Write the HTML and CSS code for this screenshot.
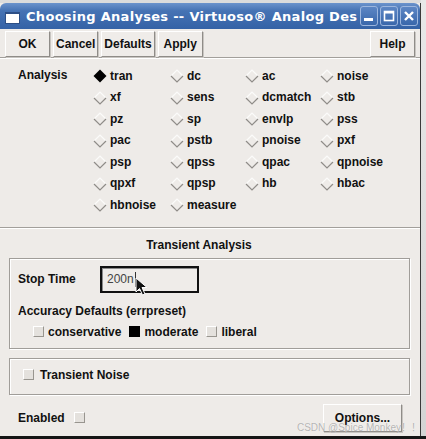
FILE: index.html
```html
<!DOCTYPE html>
<html>
<head>
<meta charset="utf-8">
<link rel="stylesheet" href="styles.css">
</head>
<body>
<div class="screen">
  <div class="top-row">
    <div class="window">
      <div class="titlebar">
        <span class="winicon"></span>
        <span class="title">Choosing Analyses -- Virtuoso® Analog Des</span>
        <div class="tbtns">
          <span class="tbtn"><svg width="18" height="20" viewBox="0 0 18 20"><rect x="4" y="12" width="9" height="3" fill="#fff"/></svg></span>
          <span class="tbtn"><svg width="18" height="20" viewBox="0 0 18 20"><rect x="4.5" y="5.5" width="9" height="9" fill="none" stroke="#fff" stroke-width="1.6"/><rect x="4.5" y="5.5" width="9" height="2" fill="#fff"/></svg></span>
          <span class="tbtn"><svg width="18" height="20" viewBox="0 0 18 20"><path d="M5 6 L13 14 M13 6 L5 14" stroke="#fff" stroke-width="2.4"/></svg></span>
        </div>
      </div>
      <div class="toolbar">
        <button class="btn">OK</button>
        <button class="btn">Cancel</button>
        <button class="btn">Defaults</button>
        <button class="btn">Apply</button>
        <span class="spacer"></span>
        <button class="btn">Help</button>
      </div>
      <div class="analysis">
        <div class="alabel">Analysis</div>
        <div class="agrid">
          <div class="radio"><svg class="dia" width="14" height="14" viewBox="0 0 14 14"><path d="M7 0.5 L13.5 7 L7 13.5 L0.5 7 Z" fill="#000"/></svg>tran</div>
          <div class="radio"><svg class="dia" width="14" height="14" viewBox="0 0 14 14"><path d="M1 7 L7 1 L13 7" stroke="#fbfbfa" stroke-width="1.2" fill="none"/><path d="M1 7 L7 13 L13 7" stroke="#8f8c88" stroke-width="1.2" fill="none"/></svg>dc</div>
          <div class="radio"><svg class="dia" width="14" height="14" viewBox="0 0 14 14"><path d="M1 7 L7 1 L13 7" stroke="#fbfbfa" stroke-width="1.2" fill="none"/><path d="M1 7 L7 13 L13 7" stroke="#8f8c88" stroke-width="1.2" fill="none"/></svg>ac</div>
          <div class="radio"><svg class="dia" width="14" height="14" viewBox="0 0 14 14"><path d="M1 7 L7 1 L13 7" stroke="#fbfbfa" stroke-width="1.2" fill="none"/><path d="M1 7 L7 13 L13 7" stroke="#8f8c88" stroke-width="1.2" fill="none"/></svg>noise</div>

          <div class="radio"><svg class="dia" width="14" height="14" viewBox="0 0 14 14"><path d="M1 7 L7 1 L13 7" stroke="#fbfbfa" stroke-width="1.2" fill="none"/><path d="M1 7 L7 13 L13 7" stroke="#8f8c88" stroke-width="1.2" fill="none"/></svg>xf</div>
          <div class="radio"><svg class="dia" width="14" height="14" viewBox="0 0 14 14"><path d="M1 7 L7 1 L13 7" stroke="#fbfbfa" stroke-width="1.2" fill="none"/><path d="M1 7 L7 13 L13 7" stroke="#8f8c88" stroke-width="1.2" fill="none"/></svg>sens</div>
          <div class="radio"><svg class="dia" width="14" height="14" viewBox="0 0 14 14"><path d="M1 7 L7 1 L13 7" stroke="#fbfbfa" stroke-width="1.2" fill="none"/><path d="M1 7 L7 13 L13 7" stroke="#8f8c88" stroke-width="1.2" fill="none"/></svg>dcmatch</div>
          <div class="radio"><svg class="dia" width="14" height="14" viewBox="0 0 14 14"><path d="M1 7 L7 1 L13 7" stroke="#fbfbfa" stroke-width="1.2" fill="none"/><path d="M1 7 L7 13 L13 7" stroke="#8f8c88" stroke-width="1.2" fill="none"/></svg>stb</div>

          <div class="radio"><svg class="dia" width="14" height="14" viewBox="0 0 14 14"><path d="M1 7 L7 1 L13 7" stroke="#fbfbfa" stroke-width="1.2" fill="none"/><path d="M1 7 L7 13 L13 7" stroke="#8f8c88" stroke-width="1.2" fill="none"/></svg>pz</div>
          <div class="radio"><svg class="dia" width="14" height="14" viewBox="0 0 14 14"><path d="M1 7 L7 1 L13 7" stroke="#fbfbfa" stroke-width="1.2" fill="none"/><path d="M1 7 L7 13 L13 7" stroke="#8f8c88" stroke-width="1.2" fill="none"/></svg>sp</div>
          <div class="radio"><svg class="dia" width="14" height="14" viewBox="0 0 14 14"><path d="M1 7 L7 1 L13 7" stroke="#fbfbfa" stroke-width="1.2" fill="none"/><path d="M1 7 L7 13 L13 7" stroke="#8f8c88" stroke-width="1.2" fill="none"/></svg>envlp</div>
          <div class="radio"><svg class="dia" width="14" height="14" viewBox="0 0 14 14"><path d="M1 7 L7 1 L13 7" stroke="#fbfbfa" stroke-width="1.2" fill="none"/><path d="M1 7 L7 13 L13 7" stroke="#8f8c88" stroke-width="1.2" fill="none"/></svg>pss</div>

          <div class="radio"><svg class="dia" width="14" height="14" viewBox="0 0 14 14"><path d="M1 7 L7 1 L13 7" stroke="#fbfbfa" stroke-width="1.2" fill="none"/><path d="M1 7 L7 13 L13 7" stroke="#8f8c88" stroke-width="1.2" fill="none"/></svg>pac</div>
          <div class="radio"><svg class="dia" width="14" height="14" viewBox="0 0 14 14"><path d="M1 7 L7 1 L13 7" stroke="#fbfbfa" stroke-width="1.2" fill="none"/><path d="M1 7 L7 13 L13 7" stroke="#8f8c88" stroke-width="1.2" fill="none"/></svg>pstb</div>
          <div class="radio"><svg class="dia" width="14" height="14" viewBox="0 0 14 14"><path d="M1 7 L7 1 L13 7" stroke="#fbfbfa" stroke-width="1.2" fill="none"/><path d="M1 7 L7 13 L13 7" stroke="#8f8c88" stroke-width="1.2" fill="none"/></svg>pnoise</div>
          <div class="radio"><svg class="dia" width="14" height="14" viewBox="0 0 14 14"><path d="M1 7 L7 1 L13 7" stroke="#fbfbfa" stroke-width="1.2" fill="none"/><path d="M1 7 L7 13 L13 7" stroke="#8f8c88" stroke-width="1.2" fill="none"/></svg>pxf</div>

          <div class="radio"><svg class="dia" width="14" height="14" viewBox="0 0 14 14"><path d="M1 7 L7 1 L13 7" stroke="#fbfbfa" stroke-width="1.2" fill="none"/><path d="M1 7 L7 13 L13 7" stroke="#8f8c88" stroke-width="1.2" fill="none"/></svg>psp</div>
          <div class="radio"><svg class="dia" width="14" height="14" viewBox="0 0 14 14"><path d="M1 7 L7 1 L13 7" stroke="#fbfbfa" stroke-width="1.2" fill="none"/><path d="M1 7 L7 13 L13 7" stroke="#8f8c88" stroke-width="1.2" fill="none"/></svg>qpss</div>
          <div class="radio"><svg class="dia" width="14" height="14" viewBox="0 0 14 14"><path d="M1 7 L7 1 L13 7" stroke="#fbfbfa" stroke-width="1.2" fill="none"/><path d="M1 7 L7 13 L13 7" stroke="#8f8c88" stroke-width="1.2" fill="none"/></svg>qpac</div>
          <div class="radio"><svg class="dia" width="14" height="14" viewBox="0 0 14 14"><path d="M1 7 L7 1 L13 7" stroke="#fbfbfa" stroke-width="1.2" fill="none"/><path d="M1 7 L7 13 L13 7" stroke="#8f8c88" stroke-width="1.2" fill="none"/></svg>qpnoise</div>

          <div class="radio"><svg class="dia" width="14" height="14" viewBox="0 0 14 14"><path d="M1 7 L7 1 L13 7" stroke="#fbfbfa" stroke-width="1.2" fill="none"/><path d="M1 7 L7 13 L13 7" stroke="#8f8c88" stroke-width="1.2" fill="none"/></svg>qpxf</div>
          <div class="radio"><svg class="dia" width="14" height="14" viewBox="0 0 14 14"><path d="M1 7 L7 1 L13 7" stroke="#fbfbfa" stroke-width="1.2" fill="none"/><path d="M1 7 L7 13 L13 7" stroke="#8f8c88" stroke-width="1.2" fill="none"/></svg>qpsp</div>
          <div class="radio"><svg class="dia" width="14" height="14" viewBox="0 0 14 14"><path d="M1 7 L7 1 L13 7" stroke="#fbfbfa" stroke-width="1.2" fill="none"/><path d="M1 7 L7 13 L13 7" stroke="#8f8c88" stroke-width="1.2" fill="none"/></svg>hb</div>
          <div class="radio"><svg class="dia" width="14" height="14" viewBox="0 0 14 14"><path d="M1 7 L7 1 L13 7" stroke="#fbfbfa" stroke-width="1.2" fill="none"/><path d="M1 7 L7 13 L13 7" stroke="#8f8c88" stroke-width="1.2" fill="none"/></svg>hbac</div>

          <div class="radio"><svg class="dia" width="14" height="14" viewBox="0 0 14 14"><path d="M1 7 L7 1 L13 7" stroke="#fbfbfa" stroke-width="1.2" fill="none"/><path d="M1 7 L7 13 L13 7" stroke="#8f8c88" stroke-width="1.2" fill="none"/></svg>hbnoise</div>
          <div class="radio"><svg class="dia" width="14" height="14" viewBox="0 0 14 14"><path d="M1 7 L7 1 L13 7" stroke="#fbfbfa" stroke-width="1.2" fill="none"/><path d="M1 7 L7 13 L13 7" stroke="#8f8c88" stroke-width="1.2" fill="none"/></svg>measure</div>
        </div>
      </div>
      <div class="sectitle">Transient Analysis</div>
      <div class="group g1">
        <div class="stoprow">
          <span class="stoplabel">Stop Time</span>
          <div class="field">200n<span class="caret"></span>
            <svg class="pointer" width="14" height="20" viewBox="0 0 14 20"><path d="M1 1 L1 15 L4.5 11.5 L7.5 18 L10 17 L7 10.5 L12 10.5 Z" fill="#111" stroke="#fff" stroke-width="1"/></svg>
          </div>
        </div>
        <div class="acclabel">Accuracy Defaults (errpreset)</div>
        <div class="opts">
          <span class="opt"><span class="chk"></span>conservative</span>
          <span class="opt"><span class="chk on"></span>moderate</span>
          <span class="opt"><span class="chk"></span>liberal</span>
        </div>
      </div>
      <div class="group g2">
        <span class="opt wide"><span class="chk"></span>Transient Noise</span>
      </div>
      <div class="footer">
        <span class="opt enabled">Enabled<span class="chk"></span></span>
        <button class="btn options">Options...</button>
      </div>
    </div>
    <div class="outside"></div>
  </div>
  <div class="bottom"></div>
  <div class="watermark">CSDN @Spice Monkey！！</div>
</div>
</body>
</html>
```
FILE: styles.css
```css
html, body {
  margin: 0;
  padding: 0;
}
body {
  font-family: "Liberation Sans", Arial, sans-serif;
  font-size: 12px;
  font-weight: bold;
  color: #111;
}
.screen {
  width: 426px;
  height: 439px;
  position: relative;
  overflow: hidden;
  background: #dcdcdc;
  display: flex;
  flex-direction: column;
}
.top-row {
  display: flex;
  height: 436px;
}
.window {
  width: 420px;
  margin-top: 3px;
  background: #eeebe8;
  border-right: 1px solid #3a3a3a;
  display: flex;
  flex-direction: column;
}
.outside {
  flex: 1;
  background: linear-gradient(#e8e8e8, #d4d4d4);
}
.bottom {
  height: 3px;
  background: #151515;
}

/* title bar */
.titlebar {
  height: 26px;
  flex: none;
  display: flex;
  align-items: center;
  padding-left: 5px;
  background: linear-gradient(#6b93cc 0%, #4673b4 30%, #3462a6 100%);
  border-radius: 6px 6px 0 0;
}
.winicon {
  width: 13px;
  height: 9px;
  flex: none;
  background: #fff;
  border: 1px solid #2d4f86;
  border-top: 2px solid #2d4f86;
  margin-top: 3px;
}
.title {
  flex: 1;
  min-width: 0;
  margin-left: 6px;
  white-space: nowrap;
  overflow: hidden;
  color: #fff;
  font-family: "DejaVu Sans", sans-serif;
  font-weight: bold;
  font-size: 13px;
  letter-spacing: 0.3px;
}
.tbtns {
  display: flex;
  gap: 2px;
  padding: 0 2px 0 2px;
}
.tbtn {
  width: 18px;
  height: 20px;
  box-sizing: border-box;
  border: 1px solid #9cb6de;
  border-radius: 3px;
  background: linear-gradient(#5c86c4, #3967ab);
  display: flex;
}
.tbtn svg {
  margin: -1px;
}

/* buttons */
.btn {
  font-family: "Liberation Sans", Arial, sans-serif;
  font-weight: bold;
  font-size: 12px;
  color: #111;
  height: 26px;
  min-width: 45px;
  padding: 0 2px;
  background: #efece9;
  border: 1px solid;
  border-color: #ffffff #8f8c88 #8f8c88 #ffffff;
  box-shadow: 1px 1px 0 #c8c5c1;
  margin: 0;
}
.toolbar {
  height: 29px;
  box-sizing: border-box;
  flex: none;
  display: flex;
  gap: 3px;
  padding: 2px 5px 1px 5px;
  border-bottom: 1px solid #a29f9b;
  box-shadow: 0 1px 0 #ffffff;
}
.spacer {
  flex: 1;
}

/* analysis */
.analysis {
  display: flex;
  padding: 6px 0 11px 18px;
  border-bottom: 1px solid #a29f9b;
  box-shadow: 0 1px 0 #ffffff;
  margin-top: 1px;
}
.alabel {
  width: 75px;
  line-height: 21.5px;
}
.agrid {
  display: grid;
  grid-template-columns: 77px 75px 75px auto;
  grid-auto-rows: 21.5px;
}
.radio {
  display: flex;
  align-items: center;
  gap: 3px;
}
.dia {
  flex: none;
  margin-top: 1px;
}

/* transient */
.sectitle {
  text-align: center;
  line-height: 16px;
  margin-top: 9px;
  padding-right: 22px;
}
.group {
  margin: 5px 10px 0 9px;
  border: 1px solid #a09d99;
  box-shadow: inset 1px 1px 0 #ffffff, 1px 1px 0 #ffffff;
}
.g1 {
  padding: 7px 8px 8px 8px;
}
.stoprow {
  display: flex;
  align-items: center;
}
.stoplabel {
  width: 82px;
}
.field {
  position: relative;
  width: 99px;
  height: 27px;
  box-sizing: border-box;
  border: 2px solid #111;
  box-shadow: inset 1px 1px 0 #8a8a8a;
  background: #efece9;
  padding-left: 5px;
  display: flex;
  align-items: center;
  font-weight: normal;
  color: #444;
  font-size: 12px;
}
.caret {
  display: inline-block;
  width: 1px;
  height: 15px;
  background: #333;
  margin-left: 1px;
}
.pointer {
  position: absolute;
  left: 33px;
  top: 9px;
}
.acclabel {
  margin-top: 10px;
  line-height: 16px;
}
.opts {
  display: flex;
  gap: 8px;
  margin-top: 5px;
  margin-left: 15px;
  line-height: 16px;
}
.opt {
  display: flex;
  align-items: center;
  gap: 4px;
  line-height: 16px;
}
.chk {
  width: 11px;
  height: 11px;
  box-sizing: border-box;
  border: 1px solid;
  border-color: #ffffff #98958f #98958f #ffffff;
  background: #e4e1dd;
  flex: none;
}
.chk.on {
  background: #000;
  border-color: #000;
}
.g2 {
  margin-top: 9px;
  padding: 8px 13px 11px 13px;
}
.opt.wide {
  gap: 6px;
}
.footer {
  display: flex;
  align-items: center;
  justify-content: space-between;
  margin-top: 9px;
  padding: 0 18px 0 18px;
  height: 28px;
}
.opt.enabled {
  gap: 9px;
}
.btn.options {
  width: 79px;
  height: 28px;
}
.watermark {
  position: absolute;
  right: 5px;
  bottom: 5px;
  font-family: "Liberation Sans", "Noto Sans CJK SC", sans-serif;
  font-weight: normal;
  font-size: 10px;
  color: rgba(150, 150, 150, 0.7);
  text-shadow: 0 0 1px rgba(255, 255, 255, 0.8);
}
```
